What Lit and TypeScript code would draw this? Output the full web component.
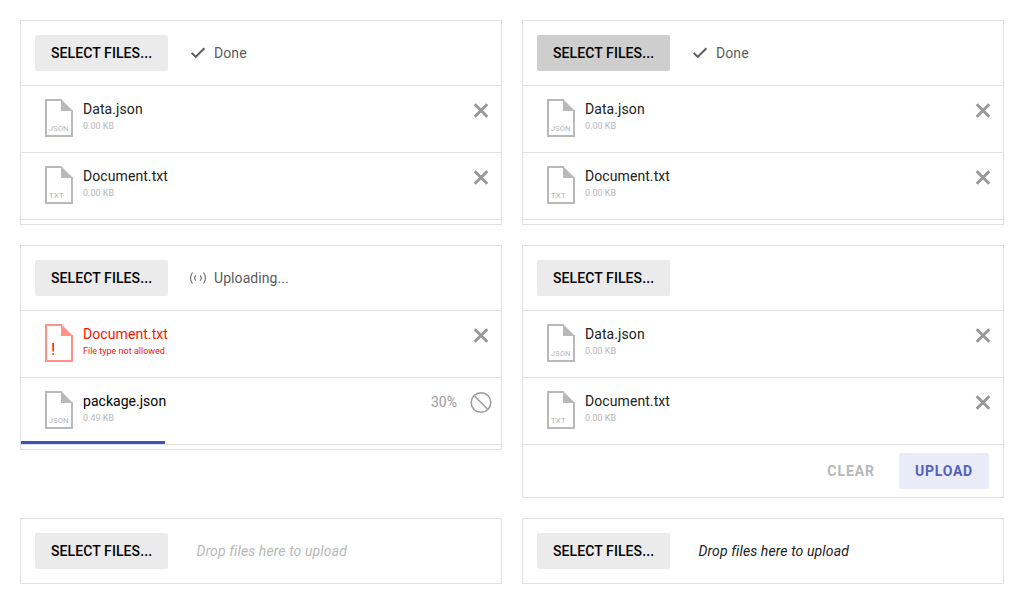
import { LitElement, html, css, svg, nothing } from "lit";
import { customElement, property } from "lit/decorators.js";

interface FileRow { name: string; size: string; type: string; error?: boolean; progress?: number; }
interface Upload { state?: string; hover?: boolean; drop?: string; files?: FileRow[]; actions?: boolean; }

const data: FileRow = { name: "Data.json", size: "0.00 KB", type: "JSON" };
const doc: FileRow = { name: "Document.txt", size: "0.00 KB", type: "TXT" };
const panels: Upload[] = [
  { state: "Done", files: [data, doc] },
  { state: "Done", hover: true, files: [data, doc] },
  { state: "Uploading...", files: [
    { name: "Document.txt", size: "File type not allowed.", type: "!", error: true },
    { name: "package.json", size: "0.49 KB", type: "JSON", progress: 30 } ] },
  { files: [data, doc], actions: true },
  { drop: "idle" },
  { drop: "active" },
];

@customElement("upload-panel")
class UploadPanel extends LitElement {
  @property({ attribute: false }) model: Upload = {};
  static styles = css`
    :host { display: block; box-sizing: border-box; border: 1px solid #e0e0e0; background: #fff; font: 14px/20px Roboto, sans-serif; color: #212121; }
    .head { display: flex; align-items: center; height: 64px; padding-left: 14px; }
    .select { box-sizing: border-box; width: 133px; height: 36px; padding-left: 16px; border-radius: 2px; background: #ebebeb; color: #000; font-weight: 500; line-height: 36px; letter-spacing: .09px; white-space: nowrap; }
    .select.hover { background: #cecece; }
    .status { display: flex; align-items: center; gap: 8px; padding-left: 22px; color: #5c5c5c; letter-spacing: .08px; }
    .status svg { display: block; width: 16px; height: 16px; overflow: visible; }
    .drop { padding-left: 28.5px; font-style: italic; letter-spacing: .11px; }
    .drop.idle { color: #b8b8b8; }
    .files { border-top: 1px solid #e0e0e0; padding-bottom: 4px; }
    .row { display: flex; box-sizing: border-box; height: 67px; padding: 13px 12px 0 24px; border-bottom: 1px solid #e0e0e0; position: relative; }
    .icon { width: 28px; height: 38px; flex: none; color: #b9b9b9; }
    .text { flex: 1; padding-left: 10px; }
    .name { line-height: 20px; letter-spacing: .08px; }
    .size { font-size: 9px; line-height: 12px; margin-top: 1px; color: #b8b8b8; }
    .error .name, .error .size { color: #f31700; }
    .error .icon { color: #ff9185; }
    .busy .name { color: #000; letter-spacing: .03px; }
    .pct { color: #999; padding: 1px 13px 0 0; }
    .act { width: 16px; height: 16px; margin-top: 4px; overflow: visible; }
    .busy { padding-right: 9px; }
    .busy .act { width: 22px; height: 22px; margin-top: 0; }
    .bar { position: absolute; left: 0; bottom: 0; height: 3px; background: #3f51b5; }
    .foot { display: flex; justify-content: flex-end; gap: 8px; padding: 4px 14px 8px; font-weight: 700; line-height: 36px; }
    .clear { padding: 0 16px; color: #b8b8b8; letter-spacing: .95px; }
    .upload { box-sizing: border-box; width: 90px; padding-left: 16px; border-radius: 2px; color: #5262bc; background: #e9ebf8; letter-spacing: .75px; }
  `;
  fileIcon(f: FileRow) {
    return html`<svg class="icon" viewBox="0 0 28 38">
      <path d="M17 1H1V37H27V11" fill="none" stroke="currentColor" stroke-width="2"/>
      <path d="M16 0L28 12H16Z" fill="currentColor"/>
      ${f.error
        ? svg`<text x="6.1" y="31" font-size="17" fill="#f31700">!</text>`
        : svg`<text x="3.8" y="32" font-size="7" textLength=${f.type === "JSON" ? 19.8 : 15} lengthAdjust="spacingAndGlyphs" fill="currentColor">${f.type}</text>`}
    </svg>`;
  }
  row(f: FileRow) {
    const busy = f.progress !== undefined;
    return html`<div class="row ${f.error ? "error" : ""} ${busy ? "busy" : ""}">
      ${this.fileIcon(f)}
      <div class="text"><div class="name">${f.name}</div><div class="size">${f.size}</div></div>
      ${busy
        ? html`<span class="pct">${f.progress}%</span>
          <svg class="act" viewBox="0 0 22 22" fill="none" stroke="#999" stroke-width="1.5"><circle cx="11" cy="11.5" r="9.8"/><path d="M4 4.5L18 18.5"/></svg>
          <div class="bar" style="width:${f.progress}%"></div>`
        : html`<svg class="act" viewBox="0 0 16 16" stroke="#999" stroke-width="3"><path d="M1.7 1.2L14.3 13.8M14.3 1.2L1.7 13.8"/></svg>`}
    </div>`;
  }
  render() {
    const m = this.model;
    return html`<div class="head">
        <div class="select ${m.hover ? "hover" : ""}">SELECT FILES...</div>
        ${m.state ? html`<div class="status">${m.state === "Done"
          ? html`<svg viewBox="0 0 16 16" fill="none" stroke="#5c5c5c" stroke-width="2"><path d="M1.7 7.9L5.7 11.9L14.4 3.2"/></svg>`
          : html`<svg viewBox="0 0 16 16" fill="none" stroke="#6a6a6a" stroke-width="1.1"><path d="M2.5 2.5Q-1.5 8 2.5 13.5M13.5 2.5Q17.5 8 13.5 13.5M5.9 5.3Q3.4 8 5.9 10.7M10.1 5.3Q12.6 8 10.1 10.7"/></svg>`}<span>${m.state}</span></div>` : nothing}
        ${m.drop ? html`<div class="drop ${m.drop}">Drop files here to upload</div>` : nothing}
      </div>
      ${m.files ? html`<div class="files">${m.files.map(f => this.row(f))}</div>` : nothing}
      ${m.actions ? html`<div class="foot"><div class="clear">CLEAR</div><div class="upload">UPLOAD</div></div>` : nothing}`;
  }
}

@customElement("app-root")
class AppRoot extends LitElement {
  static styles = css`
    :host { display: block; box-sizing: border-box; height: 604px; padding: 20px; background: #fff; }
    .grid { display: grid; grid-template-columns: 482px 482px; gap: 20px; align-items: start; }
  `;
  render() {
    return html`<div class="grid">${panels.map(p => html`<upload-panel .model=${p}></upload-panel>`)}</div>`;
  }
}
